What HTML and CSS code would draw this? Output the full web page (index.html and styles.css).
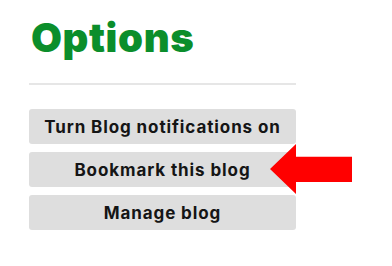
FILE: index.html
```html
<!DOCTYPE html>
<html lang="en">
<head>
  <meta charset="UTF-8">
  <title>Options</title>
  <link rel="stylesheet" href="styles.css">
</head>
<body>

<div class="options">
  <h1>Options</h1>
  <hr class="divider">
  <div class="actions">
    <button>Turn Blog notifications on</button>
    <div class="highlight">
      <button>Bookmark this blog</button>
      <svg class="arrow" width="82" height="50" viewBox="0 0 82 50">
        <polygon points="0,25 26,0 26,12.7 82,12.7 82,38 26,38 26,50" fill="#ff0000"/>
      </svg>
    </div>
    <button>Manage blog</button>
  </div>
</div>

</body>
</html>
```

FILE: styles.css
```css
body {
  font-family: Inter, 'Noto Sans', sans-serif;
  background-color: #fff;
  margin: 0;
  padding: 0;
}

.options {
  width: 267px;
  padding: 14px 0 0 29px;
}

.options h1 {
  margin: 0;
  padding-left: 2px;
  font-size: 40px;
  font-weight: 900;
  line-height: 48px;
  letter-spacing: 0.6px;
  color: #0b8e2b;
}

.divider {
  margin: 21px 0 0;
  border: none;
  height: 2px;
  background-color: #e6e6e6;
}

.actions {
  display: flex;
  flex-direction: column;
  gap: 8px;
  margin-top: 24px;
}

.actions button {
  width: 100%;
  height: 35px;
  border: none;
  border-radius: 3px;
  background-color: #dedede;
  color: #151515;
  font-family: Inter, 'Noto Sans', sans-serif;
  font-size: 17px;
  font-weight: 700;
  letter-spacing: 0.9px;
}

.highlight {
  position: relative;
}

.arrow {
  position: absolute;
  left: 241px;
  top: -8px;
}
```
